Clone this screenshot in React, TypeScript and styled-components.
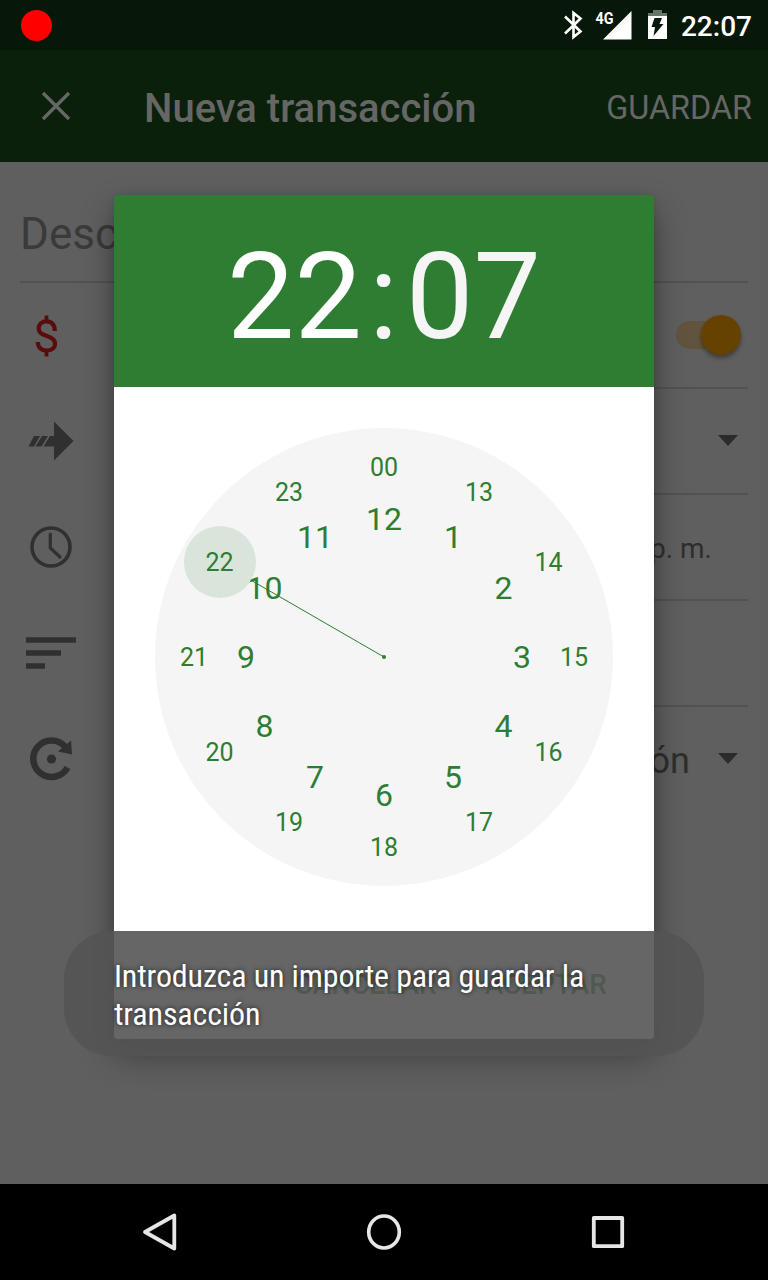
import React from 'react';
import styled, { createGlobalStyle } from 'styled-components';

const GREEN = '#2e7d32';

const GlobalStyle = createGlobalStyle`
  * { box-sizing: border-box; }
  body { margin: 0; background: #000; font-family: Roboto, 'Liberation Sans', sans-serif; }
  svg { display: block; flex: none; }
`;

const Screen = styled.div`
  position: relative;
  display: flex;
  flex-direction: column;
  width: 768px;
  height: 1280px;
  overflow: hidden;
  background: #5f5f5f;
`;

const StatusBar = styled.header`
  display: flex;
  align-items: center;
  justify-content: space-between;
  height: 50px;
  padding: 0 16px 0 20px;
  background: #081808;
`;

const RecordDot = styled.span`
  width: 31px;
  height: 31px;
  margin-left: 0.5px;
  border-radius: 50%;
  background: #f00;
`;

const StatusIcons = styled.div`
  display: flex;
  align-items: center;
`;

const StatusTime = styled.span`
  margin-left: 13px;
  padding-top: 3px;
  color: #fff;
  font-size: 28px;
  font-weight: 500;
  line-height: 32px;
`;

const Toolbar = styled.nav`
  display: flex;
  align-items: center;
  height: 112px;
  padding: 0 16px 0 41px;
  background: #0b200a;
  color: #666;
`;

const Title = styled.h1`
  flex: 1;
  margin: 6px 0 0 73px;
  font-size: 40px;
  font-weight: 500;
  line-height: 48px;
`;

const SaveButton = styled.button`
  padding: 3px 0 0;
  border: 0;
  background: none;
  color: inherit;
  font: 400 32.4px/40px Roboto, sans-serif;
`;

const Form = styled.main`
  flex: 1;
  padding: 0 20px;
`;

const DescriptionField = styled.div`
  height: 121px;
  padding: 46px 0 0;
  border-bottom: 2px solid #525252;
  color: #3a3a3a;
  font-size: 44px;
  line-height: 52px;
`;

const Row = styled.div`
  display: flex;
  height: 106px;
`;

const RowIcon = styled.div`
  display: flex;
  align-items: center;
  width: 100px;
  color: #303030;
`;

const RowValue = styled.div<{ $last?: boolean; $size?: number }>`
  display: flex;
  flex: 1;
  align-items: center;
  justify-content: flex-end;
  border-bottom: 2px solid ${(p) => (p.$last ? 'transparent' : '#525252')};
  color: #2e2e2e;
  font-size: ${(p) => p.$size ?? 36}px;
`;

const TimeValue = styled.span`
  padding: 3px 36px 0 0;
`;

const RepeatValue = styled.span`
  padding: 4px 28px 0 0;
`;

const Caret = styled.span`
  margin: 0 10px 2px 0;
  border: 10px solid transparent;
  border-top: 11px solid #2b2b2b;
  border-bottom: 0;
`;

const SwitchTrack = styled.div`
  display: flex;
  align-items: center;
  justify-content: flex-end;
  width: 60px;
  height: 28px;
  margin-right: 12px;
  border-radius: 14px;
  background: #62543c;
`;

const SwitchThumb = styled.span`
  width: 40px;
  height: 40px;
  margin-right: -5px;
  border-radius: 50%;
  background: #664200;
  box-shadow: 0 3px 4px rgba(0, 0, 0, 0.35);
`;

const NavBar = styled.footer`
  display: flex;
  align-items: center;
  justify-content: center;
  gap: 176px;
  height: 96px;
  background: #000;
`;

const Dialog = styled.section`
  position: absolute;
  top: 195px;
  left: 114px;
  display: flex;
  flex-direction: column;
  width: 540px;
  height: 844px;
  overflow: hidden;
  border-radius: 4px;
  background: linear-gradient(${GREEN} 192px, #fff 192px);
`;

const DialogShadow = styled.div`
  position: absolute;
  top: 195px;
  left: 114px;
  width: 540px;
  height: 844px;
  border-radius: 4px;
  box-shadow: 0 16px 32px rgba(0, 0, 0, 0.38), 0 0 8px rgba(0, 0, 0, 0.12);
`;

const TimeHeader = styled.div`
  display: flex;
  align-items: center;
  justify-content: center;
  height: 192px;
  padding-top: 11px;
  color: #fff;
  font-size: 120px;
  line-height: 140px;
`;

const Colon = styled.span`
  margin: 0 8px 0 7px;
  color: #f5f5f5;
`;

const Minutes = styled.span`
  color: #f5f5f5;
`;

const ClockArea = styled.div`
  display: flex;
  flex: 1;
  justify-content: center;
  padding-top: 41px;
`;

const DialogActions = styled.div`
  display: flex;
  justify-content: flex-end;
  gap: 48px;
  height: 80px;
  padding: 8px 47px 0 0;
  color: ${GREEN};
  font-size: 28px;
  font-weight: 500;
  line-height: 36px;
`;

const Toast = styled.div`
  position: absolute;
  top: 931px;
  left: 64px;
  width: 640px;
  height: 125px;
  padding: 26px 50px 0;
  border-radius: 48px;
  background: rgba(84, 84, 84, 0.894);
  color: #fff;
`;

const ToastText = styled.p`
  width: 500px;
  margin: 0;
  font-family: 'Roboto Condensed', Roboto, sans-serif;
  font-size: 32px;
  font-stretch: 75%;
  letter-spacing: -0.13px;
  line-height: 38px;
  text-shadow: 0 0 5px rgba(0, 0, 0, 0.75);
`;

const NumberLabel = styled.text`
  fill: ${GREEN};
  font-family: Roboto, sans-serif;
  text-anchor: middle;
`;

const outerHours = ['00', '13', '14', '15', '16', '17', '18', '19', '20', '21', '22', '23'];
const innerHours = ['12', '1', '2', '3', '4', '5', '6', '7', '8', '9', '10', '11'];

const place = (index: number, radius: number) => {
  const angle = (index * Math.PI) / 6;
  return { x: 229 + radius * Math.sin(angle), y: 229 - radius * Math.cos(angle) };
};

function ClockFace() {
  const selected = place(10, 190);
  const handEnd = place(10, 154);
  return (
    <svg width="458" height="458" viewBox="0 0 458 458">
      <circle cx="229" cy="229" r="229" fill="#f5f5f5" />
      {innerHours.map((hour, i) => {
        const p = place(i, 138);
        return <NumberLabel key={hour} x={p.x} y={Math.round(p.y + 11)} fontSize="32">{hour}</NumberLabel>;
      })}
      <circle cx={selected.x + 0.5} cy={selected.y} r="36" fill="#d9e5da" />
      {outerHours.map((hour, i) => {
        const p = place(i, 190);
        return <NumberLabel key={hour} x={p.x} y={Math.round(p.y + 9)} fontSize="25">{hour}</NumberLabel>;
      })}
      <line x1="229" y1="229" x2={handEnd.x} y2={handEnd.y} stroke={GREEN} strokeWidth="1" />
      <circle cx="229" cy="229" r="2" fill={GREEN} />
    </svg>
  );
}

function StatusGlyphs() {
  return (
    <svg width="106" height="50" viewBox="562 0 106 50">
      <path d="M565 16.500 L580.500 31.500 L573.500 37 V13 L580.500 18.500 L565 33.500" fill="none" stroke="#fff" strokeWidth="2.600" />
      <text x="595.500" y="24" fill="#fff" fontSize="17" fontWeight="700" fontFamily="Roboto, sans-serif" textLength="18" lengthAdjust="spacingAndGlyphs">4G</text>
      <path d="M631.500 11 V39.500 H603 Z" fill="#fff" />
      <path d="M653 10 H662 V13 H667 V16 H648 V13 H653 Z" fill="#68766a" />
      <path d="M648 16 H667 V39 H648 Z" fill="#fff" />
      <path d="M654.500 18 H662 L659.500 24 H663.500 L653.500 36 L655 27 H651.500 Z" fill="#081808" />
    </svg>
  );
}

export default function App() {
  return (
    <Screen>
      <GlobalStyle />
      <StatusBar>
        <RecordDot />
        <StatusIcons>
          <StatusGlyphs />
          <StatusTime>22:07</StatusTime>
        </StatusIcons>
      </StatusBar>
      <Toolbar>
        <svg width="30" height="30" viewBox="0 0 30 30" stroke="currentColor" strokeWidth="3.400">
          <path d="M2 2 L28 28 M28 2 L2 28" />
        </svg>
        <Title>Nueva transacción</Title>
        <SaveButton>GUARDAR</SaveButton>
      </Toolbar>
      <Form>
        <DescriptionField>Descripción</DescriptionField>
        <Row>
          <RowIcon>
            <svg width="60" height="106" viewBox="20 283 60 106">
              <path d="M46.500 315.500 V322 M46.500 349 V356.500" stroke="#5a0c0c" strokeWidth="3.800" />
              <path d="M54.800 331 C54.800 324.500 51.500 321.300 46.700 321.300 C41.800 321.300 38.700 324.200 38.700 328.300 C38.700 333 42.200 334.500 47 336 C52 337.600 55 339.500 55 343.700 C55 348 51.600 350.500 46.700 350.500 C41.300 350.500 37.800 347.600 37.800 342" fill="none" stroke="#5a0c0c" strokeWidth="4.200" />
            </svg>
          </RowIcon>
          <RowValue>
            <SwitchTrack><SwitchThumb /></SwitchTrack>
          </RowValue>
        </Row>
        <Row>
          <RowIcon>
            <svg width="60" height="106" viewBox="20 389 60 106" fill="currentColor">
              <path d="M54 421.500 L73.500 441 L54 460.500 V446.500 H43.500 L50 436 H54 Z M34 436 H40 L34 446.500 H28.500 Z M42 436 H48 L41.500 446.500 H35.500 Z" />
            </svg>
          </RowIcon>
          <RowValue><Caret /></RowValue>
        </Row>
        <Row>
          <RowIcon>
            <svg width="60" height="106" viewBox="20 495 60 106" fill="none" stroke="currentColor">
              <circle cx="51" cy="547" r="19" strokeWidth="3.600" />
              <path d="M50.300 534 V548 L60 557" strokeWidth="3.200" strokeLinecap="round" />
            </svg>
          </RowIcon>
          <RowValue $size={28}><TimeValue>10:07 p. m.</TimeValue></RowValue>
        </Row>
        <Row>
          <RowIcon>
            <svg width="60" height="106" viewBox="20 601 60 106" fill="currentColor">
              <path d="M26 637.300 H76 V642.800 H26 Z M26 650.300 H61 V655.800 H26 Z M26 663.200 H45 V668.700 H26 Z" />
            </svg>
          </RowIcon>
          <RowValue />
        </Row>
        <Row>
          <RowIcon>
            <svg width="60" height="106" viewBox="20 707 60 106">
              <path d="M67.500 767.500 A18.200 18.200 0 1 1 65 746.500" fill="none" stroke="currentColor" strokeWidth="6.500" />
              <path d="M71 740.500 L72 754.500 L58 751.500 Z" fill="currentColor" />
              <circle cx="51.500" cy="759" r="4.600" fill="currentColor" />
            </svg>
          </RowIcon>
          <RowValue $last>
            <RepeatValue>Acción</RepeatValue>
            <Caret />
          </RowValue>
        </Row>
      </Form>
      <NavBar>
        <svg width="48" height="48" viewBox="136 1208 48 48" fill="none" stroke="#e6e6e6" strokeWidth="3.800" strokeLinejoin="round">
          <path d="M174.300 1215.500 V1248.500 L145 1232 Z" />
        </svg>
        <svg width="48" height="48" viewBox="360 1208 48 48" fill="none" stroke="#e6e6e6" strokeWidth="3.600">
          <ellipse cx="384" cy="1232" rx="15.300" ry="16" />
        </svg>
        <svg width="48" height="48" viewBox="584 1208 48 48" fill="none" stroke="#e6e6e6" strokeWidth="3.800" strokeLinejoin="round">
          <path d="M593.800 1218 H622.200 V1246.200 H593.800 Z" />
        </svg>
      </NavBar>
      <DialogShadow />
      <Dialog>
        <TimeHeader>
          <span>22</span>
          <Colon>:</Colon>
          <Minutes>07</Minutes>
        </TimeHeader>
        <ClockArea><ClockFace /></ClockArea>
        <DialogActions>
          <span>CANCELAR</span>
          <span>ACEPTAR</span>
        </DialogActions>
      </Dialog>
      <Toast>
        <ToastText>Introduzca un importe para guardar la transacción</ToastText>
      </Toast>
    </Screen>
  );
}
